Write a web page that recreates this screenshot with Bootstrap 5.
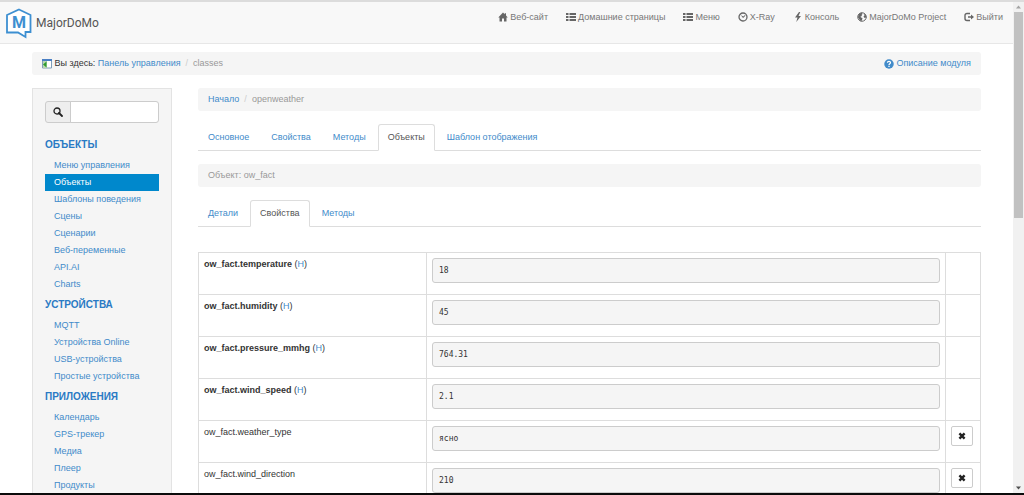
<!DOCTYPE html>
<html lang="ru">
<head>
<meta charset="utf-8">
<meta name="viewport" content="width=device-width, initial-scale=1">
<title>MajorDoMo</title>
<link href="https://cdn.jsdelivr.net/npm/bootstrap@5.3.0/dist/css/bootstrap.min.css" rel="stylesheet">
<style>
  body { font: 9px/13px "Liberation Sans", Arial, sans-serif; color: #333; background: #fff; border-top: 2px solid #dcdcdc; border-bottom: 2px solid #0b0b0b; }
  a { color: #428bca; text-decoration: none; }
  .ico { width: 10px; height: 10px; fill: currentColor; flex: none; }
  .page-view { min-width: 0; }

  .topbar { background: #f8f8f8; border-bottom: 1px solid #e7e7e7; height: 42px; padding: 0; }
  .topbar .navbar-brand { font: 12px/16px Roboto, sans-serif; color: #555; padding: 0 0 0 5px; margin: 0; gap: 3px; }
  .logo { width: 28px; height: 32px; }
  .topbar .navbar-nav { --bs-navbar-nav-link-padding-x: 9px; padding: 0 1px 12px 0; }
  .topbar .nav-link { color: #777; font-size: 9px; padding-top: 0; padding-bottom: 0; line-height: 14px; gap: 2px; }
  .topbar .ico { color: #666; }

  .content-area { padding: 8px 32px 0; }
  .crumbs { background: #f5f5f5; border-radius: 3px; padding: 5px 10px; height: 23px; color: #999; }
  .crumbs .breadcrumb { --bs-breadcrumb-font-size: 9px; --bs-breadcrumb-item-padding-x: 5px; --bs-breadcrumb-divider-color: #ccc; --bs-breadcrumb-item-active-color: #999; margin: 0; }
  .crumbs .here { color: #333; }

  .layout { gap: 26px; margin-top: 13px; }
  .sidebar { flex: 0 0 140px; background: #f5f5f5; border: 1px solid #e3e3e3; padding: 12px 12px 20px; }
  .search-box { margin-bottom: 14px; }
  .search-box .input-group-text { background: #eee; border-color: #ccc; border-radius: 3px; padding: 0 7px; color: #222; }
  .search-box .form-control { border-color: #ccc; border-radius: 3px; height: 22px; min-height: 0; padding: 0 6px; font-size: 9px; }
  .side-title { font-size: 10px; font-weight: bold; line-height: 15px; margin: 0; }
  .side-title a { color: #2a7ac4; }
  .side-list { margin: 5px 0 4px; }
  .side-list a { display: block; line-height: 17px; padding-left: 9px; }
  .side-list a.active { background: #08c; color: #fff; }

  .main { min-width: 0; }
  .main .nav-tabs { --bs-nav-tabs-border-color: #ddd; --bs-nav-tabs-border-radius: 3px; --bs-nav-tabs-link-active-color: #555; --bs-nav-tabs-link-active-border-color: #ddd #ddd #fff; margin: 13px 0; gap: 2px; }
  .main .nav-tabs .nav-link { font-size: 9px; line-height: 13px; padding: 6px 9px; color: #428bca; }
  .main .nav-tabs .nav-link.active { color: #555; }

  .props { margin-top: 25px; table-layout: fixed; --bs-table-color: #333; border-color: #ddd; }
  .props > tbody > tr > td { padding: 5px; height: 42px; vertical-align: top; }
  .props .col-name { width: 228px; }
  .props .col-act { width: 35px; }
  .value { font: 8px/13px "DejaVu Sans Mono", monospace; color: #333; background: #f5f5f5; border: 1px solid #ccc; border-radius: 3px; padding: 5px 6px; margin: 0 0 6px; }
  .btn-del { background: #fff; border: 1px solid #ccc; border-radius: 2px; width: 22px; height: 20px; padding: 0; color: #222; }
  .btn-del .ico { width: 8px; height: 8px; }

  .scroll-rail { flex: 0 0 11px; background: #f1f1f1; }
  .scroll-rail .thumb { background: #c1c1c1; height: 42%; margin: 0 1px; }
  .scroll-rail svg { height: 10px; flex: none; }
</style>
</head>
<body class="d-flex flex-column vh-100 overflow-hidden">
<svg class="d-none" aria-hidden="true">
  <symbol id="i-home" viewBox="0 0 20 20"><path d="M10 1 .5 11H3v8h5v-6h4v6h5v-8h2.500L16 7.200V2.500h-2.500v2.200z"/></symbol>
  <symbol id="i-list" viewBox="0 0 20 20"><path d="M0 2h5v4H0zM7 2h13v4H7zM0 8h5v4H0zM7 8h13v4H7zM0 14h5v4H0zM7 14h13v4H7z"/></symbol>
  <symbol id="i-clock" viewBox="0 0 20 20"><circle cx="10" cy="10" r="8" fill="none" stroke="currentColor" stroke-width="2.600"/><path d="m5.500 6 5 3.200L14 6l1 1-4 4.500H9.500z"/></symbol>
  <symbol id="i-bolt" viewBox="0 0 20 20"><path d="M12 0 4 11h5L6.500 20 16 8h-5l3.500-8z"/></symbol>
  <symbol id="i-globe" viewBox="0 0 20 20"><circle cx="10" cy="10" r="8.500" fill="none" stroke="currentColor" stroke-width="2"/><path d="M3 5l6-4 2 3-2 2 1 2-3 1 1 2 3 1-1 4-2 3-3-4-3-4zM13 3l5 4 1 5-2-1-2 1-2-3 2-2z"/></symbol>
  <symbol id="i-out" viewBox="0 0 20 20"><path d="M12 3H6a4 4 0 0 0-4 4v6a4 4 0 0 0 4 4h6" fill="none" stroke="currentColor" stroke-width="2.800"/><path d="M8 8.500h6V5l6 5-6 5v-3.500H8z"/></symbol>
  <symbol id="i-help" viewBox="0 0 20 20"><circle cx="10" cy="10" r="9.500"/><path d="M6.800 7.500C7 3.500 13.200 3.800 13 7.500c-.1 2-3 2.200-3 4.500" fill="none" stroke="#fff" stroke-width="2.400"/><path fill="#fff" d="M8.700 13.500h2.600V16H8.700z"/></symbol>
  <symbol id="i-search" viewBox="0 0 20 20"><circle cx="8" cy="8" r="6" fill="none" stroke="currentColor" stroke-width="2.600"/><path d="m12 12 6 6" stroke="currentColor" stroke-width="3.600" stroke-linecap="round"/></symbol>
  <symbol id="i-remove" viewBox="0 0 20 20"><path d="M3.500 3.500 16.500 16.500M16.500 3.500 3.500 16.500" stroke="currentColor" stroke-width="6"/></symbol>
</svg>

<div class="d-flex flex-fill overflow-hidden">
  <div class="page-view flex-fill overflow-hidden">
    <nav class="navbar navbar-expand topbar">
      <a class="navbar-brand d-flex align-items-center" href="#">
        <svg class="logo" viewBox="0 0 28 32" aria-hidden="true"><path d="M14 2.500 25.500 8v17H20.500v5L13 25.500H2V8z" fill="#fff" stroke="#3d8fd1" stroke-width="1.800"/><text x="14" y="21" text-anchor="middle" font-family="Roboto, sans-serif" font-weight="bold" font-size="16" fill="#3d8fd1">M</text></svg>
        <span>MajorDoMo</span>
      </a>
      <div class="navbar-nav ms-auto">
        <a class="nav-link d-flex align-items-center" href="#"><svg class="ico"><use href="#i-home"/></svg>Веб-сайт</a>
        <a class="nav-link d-flex align-items-center" href="#"><svg class="ico"><use href="#i-list"/></svg>Домашние страницы</a>
        <a class="nav-link d-flex align-items-center" href="#"><svg class="ico"><use href="#i-list"/></svg>Меню</a>
        <a class="nav-link d-flex align-items-center" href="#"><svg class="ico"><use href="#i-clock"/></svg>X-Ray</a>
        <a class="nav-link d-flex align-items-center" href="#"><svg class="ico"><use href="#i-bolt"/></svg>Консоль</a>
        <a class="nav-link d-flex align-items-center" href="#"><svg class="ico"><use href="#i-globe"/></svg>MajorDoMo Project</a>
        <a class="nav-link d-flex align-items-center" href="#"><svg class="ico"><use href="#i-out"/></svg>Выйти</a>
      </div>
    </nav>

    <div class="content-area">
      <div class="crumbs d-flex align-items-center">
        <svg class="ico" viewBox="0 0 10 10" aria-hidden="true"><path d="M.5 1h9v8h-9z" fill="#fff" stroke="#7f9db9"/><path fill="#4a7fc4" d="M0 0h10v2H0z"/><path fill="#b9d7b0" d="M1 2h4v7H1z"/><path fill="#2f9a2f" d="m1 5.500 3.500-3v6z"/></svg>
        <span class="here text-nowrap">&nbsp;Вы здесь:&nbsp;</span>
        <ol class="breadcrumb">
          <li class="breadcrumb-item"><a href="#">Панель управления</a></li>
          <li class="breadcrumb-item active">classes</li>
        </ol>
        <a class="ms-auto d-flex align-items-center" href="#"><svg class="ico"><use href="#i-help"/></svg>&nbsp;Описание модуля</a>
      </div>

      <div class="layout d-flex align-items-start">
        <aside class="sidebar">
          <div class="input-group search-box flex-nowrap">
            <label class="input-group-text" for="q" aria-label="Поиск"><svg class="ico"><use href="#i-search"/></svg></label>
            <input class="form-control" id="q" type="text">
          </div>
          <h2 class="side-title"><a href="#">ОБЪЕКТЫ</a></h2>
          <ul class="list-unstyled side-list">
            <li><a href="#">Меню управления</a></li>
            <li><a class="active" href="#">Объекты</a></li>
            <li><a href="#">Шаблоны поведения</a></li>
            <li><a href="#">Сцены</a></li>
            <li><a href="#">Сценарии</a></li>
            <li><a href="#">Веб-переменные</a></li>
            <li><a href="#">API.AI</a></li>
            <li><a href="#">Charts</a></li>
          </ul>
          <h2 class="side-title"><a href="#">УСТРОЙСТВА</a></h2>
          <ul class="list-unstyled side-list">
            <li><a href="#">MQTT</a></li>
            <li><a href="#">Устройства Online</a></li>
            <li><a href="#">USB-устройства</a></li>
            <li><a href="#">Простые устройства</a></li>
          </ul>
          <h2 class="side-title"><a href="#">ПРИЛОЖЕНИЯ</a></h2>
          <ul class="list-unstyled side-list">
            <li><a href="#">Календарь</a></li>
            <li><a href="#">GPS-трекер</a></li>
            <li><a href="#">Медиа</a></li>
            <li><a href="#">Плеер</a></li>
            <li><a href="#">Продукты</a></li>
          </ul>
        </aside>

        <main class="main flex-fill">
          <div class="crumbs">
            <ol class="breadcrumb">
              <li class="breadcrumb-item"><a href="#">Начало</a></li>
              <li class="breadcrumb-item active">openweather</li>
            </ol>
          </div>
          <ul class="nav nav-tabs">
            <li class="nav-item"><a class="nav-link" href="#">Основное</a></li>
            <li class="nav-item"><a class="nav-link" href="#">Свойства</a></li>
            <li class="nav-item"><a class="nav-link" href="#">Методы</a></li>
            <li class="nav-item"><a class="nav-link active" href="#">Объекты</a></li>
            <li class="nav-item"><a class="nav-link" href="#">Шаблон отображения</a></li>
          </ul>
          <div class="crumbs">Объект: ow_fact</div>
          <ul class="nav nav-tabs">
            <li class="nav-item"><a class="nav-link" href="#">Детали</a></li>
            <li class="nav-item"><a class="nav-link active" href="#">Свойства</a></li>
            <li class="nav-item"><a class="nav-link" href="#">Методы</a></li>
          </ul>
          <table class="table table-bordered props">
            <colgroup><col class="col-name"><col><col class="col-act"></colgroup>
            <tbody>
              <tr><td><b>ow_fact.temperature</b> (<a href="#">H</a>)</td><td><pre class="value">18</pre></td><td></td></tr>
              <tr><td><b>ow_fact.humidity</b> (<a href="#">H</a>)</td><td><pre class="value">45</pre></td><td></td></tr>
              <tr><td><b>ow_fact.pressure_mmhg</b> (<a href="#">H</a>)</td><td><pre class="value">764.31</pre></td><td></td></tr>
              <tr><td><b>ow_fact.wind_speed</b> (<a href="#">H</a>)</td><td><pre class="value">2.1</pre></td><td></td></tr>
              <tr><td>ow_fact.weather_type</td><td><pre class="value">ясно</pre></td><td><button class="btn btn-del d-flex align-items-center justify-content-center" type="button" aria-label="Удалить"><svg class="ico"><use href="#i-remove"/></svg></button></td></tr>
              <tr><td>ow_fact.wind_direction</td><td><pre class="value">210</pre></td><td><button class="btn btn-del d-flex align-items-center justify-content-center" type="button" aria-label="Удалить"><svg class="ico"><use href="#i-remove"/></svg></button></td></tr>
            </tbody>
          </table>
        </main>
      </div>
    </div>
  </div>
  <div class="scroll-rail d-flex flex-column" aria-hidden="true">
    <svg viewBox="0 0 10 10"><path d="m2.500 6.500 2.500-3 2.500 3z" fill="#a3a3a3"/></svg>
    <div class="thumb"></div>
    <svg class="mt-auto" viewBox="0 0 10 10"><path d="m2.500 3.500 2.500 3 2.500-3z" fill="#505050"/></svg>
  </div>
</div>
<script src="https://cdn.jsdelivr.net/npm/bootstrap@5.3.0/dist/js/bootstrap.bundle.min.js"></script>
</body>
</html>
